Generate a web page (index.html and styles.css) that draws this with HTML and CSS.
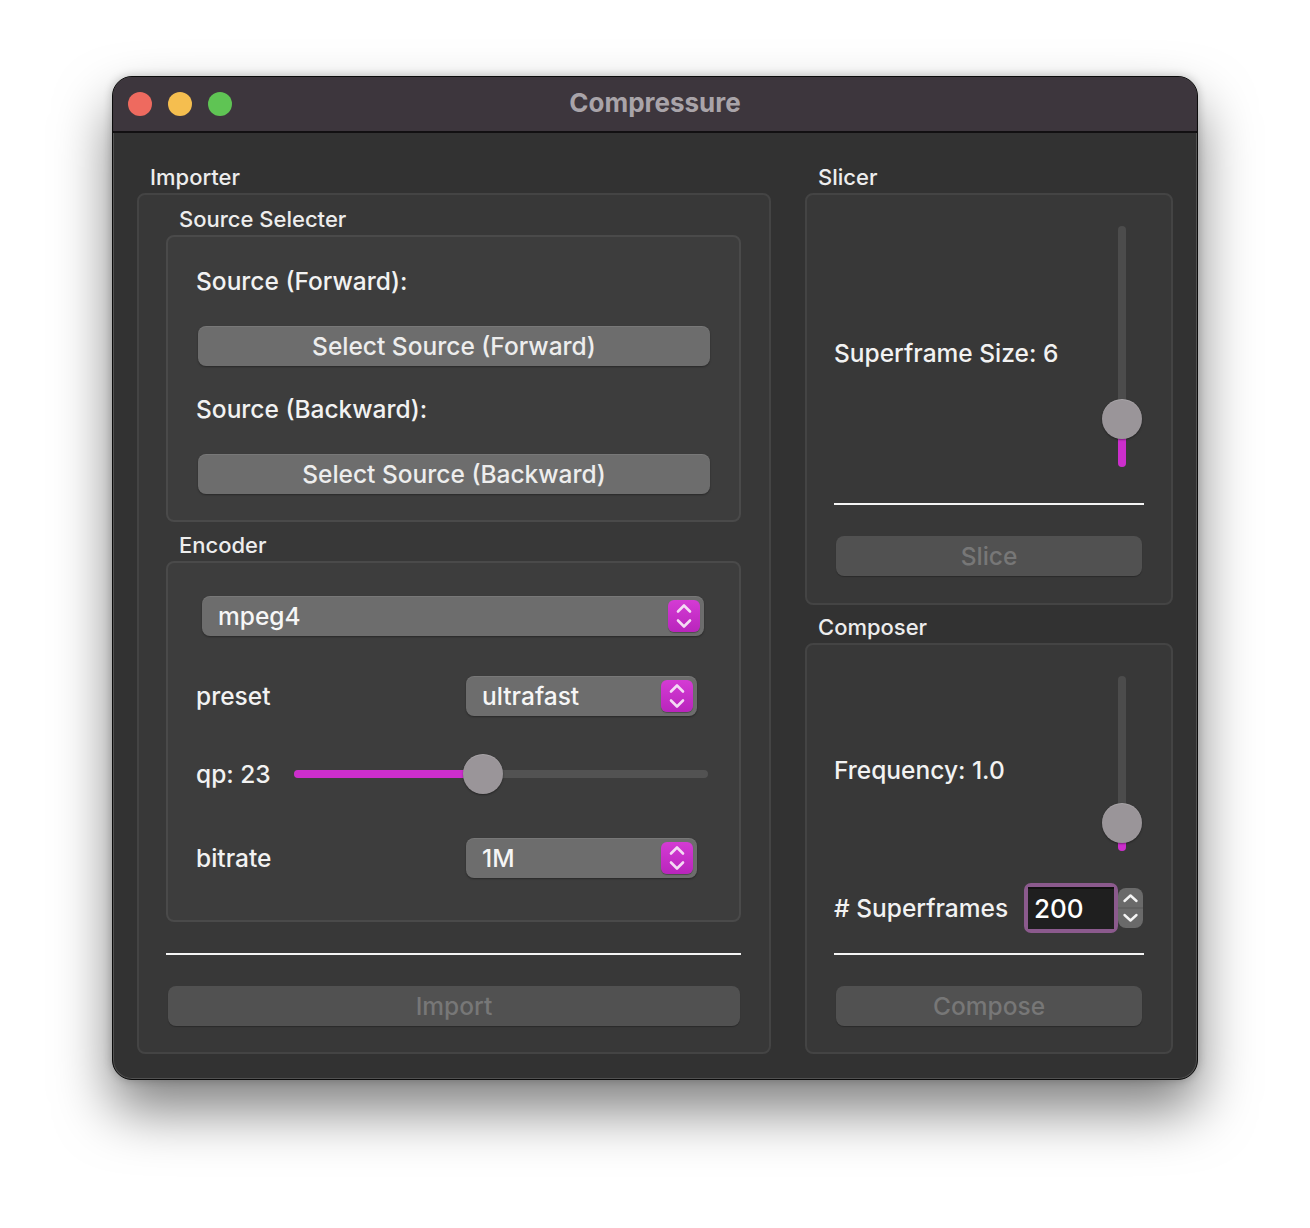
FILE: index.html
```html
<!DOCTYPE html>
<html>
<head>
<meta charset="utf-8">
<link rel="stylesheet" href="styles.css">
</head>
<body>
<div class="window">
  <div class="titlebar">
    <div class="lights">
      <span class="light red"></span>
      <span class="light yellow"></span>
      <span class="light green"></span>
    </div>
    <div class="title">Compressure</div>
  </div>
  <div class="content">
    <div class="col-left">
      <div class="group">
        <div class="group-label">Importer</div>
        <div class="box box-importer">
          <div class="group">
            <div class="group-label">Source Selecter</div>
            <div class="box inner box-source">
              <div class="label row-label">Source (Forward):</div>
              <div class="button push">Select Source (Forward)</div>
              <div class="label row-label second">Source (Backward):</div>
              <div class="button push">Select Source (Backward)</div>
            </div>
          </div>
          <div class="group encoder-group">
            <div class="group-label">Encoder</div>
            <div class="box inner box-encoder">
              <div class="popup popup-wide">
                <span class="popup-text">mpeg4</span>
                <span class="popup-arrow"><svg width="32" height="32" viewBox="0 0 32 32"><path d="M10 11.5 L16 5.5 L22 11.5 M10 20.5 L16 26.5 L22 20.5" fill="none" stroke="#f4daf4" stroke-width="2.6" stroke-linecap="round" stroke-linejoin="round"/></svg></span>
              </div>
              <div class="form-row row-preset">
                <span class="label">preset</span>
                <div class="popup popup-narrow">
                  <span class="popup-text">ultrafast</span>
                  <span class="popup-arrow"><svg width="32" height="32" viewBox="0 0 32 32"><path d="M10 11.5 L16 5.5 L22 11.5 M10 20.5 L16 26.5 L22 20.5" fill="none" stroke="#f4daf4" stroke-width="2.6" stroke-linecap="round" stroke-linejoin="round"/></svg></span>
                </div>
              </div>
              <div class="form-row row-qp">
                <span class="label qp-label">qp: 23</span>
                <div class="hslider">
                  <div class="htrack"></div>
                  <div class="hfill" style="width: 189px"></div>
                  <div class="hknob" style="left: 169px"></div>
                </div>
              </div>
              <div class="form-row row-bitrate">
                <span class="label">bitrate</span>
                <div class="popup popup-narrow">
                  <span class="popup-text">1M</span>
                  <span class="popup-arrow"><svg width="32" height="32" viewBox="0 0 32 32"><path d="M10 11.5 L16 5.5 L22 11.5 M10 20.5 L16 26.5 L22 20.5" fill="none" stroke="#f4daf4" stroke-width="2.6" stroke-linecap="round" stroke-linejoin="round"/></svg></span>
                </div>
              </div>
            </div>
          </div>
          <div class="separator sep-left"></div>
          <div class="button disabled btn-import">Import</div>
        </div>
      </div>
    </div>
    <div class="col-right">
      <div class="group">
        <div class="group-label">Slicer</div>
        <div class="box box-slicer">
          <div class="slider-row slicer-row">
            <span class="label offset-label">Superframe Size: 6</span>
            <div class="vslider">
              <div class="vtrack"></div>
              <div class="vfill" style="height: 48px"></div>
              <div class="vknob" style="bottom: 28px"></div>
            </div>
          </div>
          <div class="separator sep-right"></div>
          <div class="button disabled btn-right">Slice</div>
        </div>
      </div>
      <div class="group composer-group">
        <div class="group-label">Composer</div>
        <div class="box box-composer">
          <div class="slider-row composer-row">
            <span class="label offset-label">Frequency: 1.0</span>
            <div class="vslider">
              <div class="vtrack"></div>
              <div class="vfill" style="height: 28px"></div>
              <div class="vknob" style="bottom: 8px"></div>
            </div>
          </div>
          <div class="spin-row">
            <span class="label"># Superframes</span>
            <div class="spinbox">
              <div class="spin-field">200</div>
            </div>
            <div class="stepper">
              <svg width="25" height="40" viewBox="0 0 25 40"><path d="M6.5 13 L12.5 7.5 L18.5 13" fill="none" stroke="#f4f4f4" stroke-width="2.4" stroke-linecap="round" stroke-linejoin="round"/><line x1="0" y1="20" x2="25" y2="20" stroke="#585858" stroke-width="1"/><path d="M6.5 27 L12.5 32.5 L18.5 27" fill="none" stroke="#f4f4f4" stroke-width="2.4" stroke-linecap="round" stroke-linejoin="round"/></svg>
            </div>
          </div>
          <div class="separator sep-right sep-composer"></div>
          <div class="button disabled btn-right">Compose</div>
        </div>
      </div>
    </div>
  </div>
</div>
</body>
</html>
```

FILE: styles.css
```css
* { box-sizing: border-box; }

html, body {
  margin: 0;
  padding: 0;
  background: #ffffff;
}

body {
  min-height: 1228px;
  padding: 76px 0 0 112px;
  font-family: "Inter", "Noto Sans", "Liberation Sans", sans-serif;
  font-weight: 500;
  color: #ececec;
}

.window {
  width: 1086px;
  height: 1004px;
  background: #323232;
  border-radius: 20px;
  border: 1px solid #0c0c0c;
  box-shadow: inset 0 0 0 1px rgba(255,255,255,0.16), 0 30px 55px rgba(0,0,0,0.5), 0 0 10px rgba(0,0,0,0.22);
  overflow: hidden;
  display: flex;
  flex-direction: column;
}

.titlebar {
  height: 56px;
  background: #3d363d;
  border-bottom: 2px solid #121012;
  position: relative;
  display: flex;
  align-items: center;
  justify-content: center;
  flex-shrink: 0;
  padding-bottom: 3px;
}

.lights {
  position: absolute;
  left: 15px;
  top: 15px;
  display: flex;
  gap: 16px;
}

.light {
  width: 24px;
  height: 24px;
  border-radius: 50%;
  display: block;
}
.light.red { background: #ee6a5f; }
.light.yellow { background: #f5be4f; }
.light.green { background: #5fc454; }

.title {
  font-size: 26px;
  font-weight: 700;
  color: #a9a4a9;
}

.content {
  display: flex;
  gap: 34px;
  padding: 31px 24px 0 24px;
}

.col-left { width: 634px; }
.col-right { width: 368px; }

.group-label {
  font-size: 22px;
  line-height: 26px;
  height: 26px;
  margin-left: 13px;
  margin-bottom: 3px;
  color: #ededed;
}

.box {
  background: #383838;
  border: 2px solid #444444;
  border-radius: 8px;
}

.box.inner {
  background: #3d3d3d;
  border-color: #4a4a4a;
}

.box-importer {
  height: 861px;
  padding: 11px 28px 0 27px;
  display: flex;
  flex-direction: column;
}

.box-source {
  height: 287px;
  padding: 29px 29px 0 28px;
  display: flex;
  flex-direction: column;
}

.label {
  font-size: 24.5px;
  line-height: 30px;
  color: #f2f2f2;
  white-space: nowrap;
}

.row-label { height: 30px; }
.row-label.second { margin-top: 28px; }

.button {
  height: 40px;
  border-radius: 8px;
  font-size: 24.5px;
  display: flex;
  align-items: center;
  justify-content: center;
}

.push {
  margin-top: 30px;
  margin-left: 2px;
  background: #6d6d6d;
  color: #ededed;
  box-shadow: 0 1px 2px rgba(0,0,0,0.35), inset 0 1px 0 rgba(255,255,255,0.08);
}

.disabled {
  background: #515151;
  color: #777777;
  box-shadow: 0 1px 1px rgba(0,0,0,0.25);
}

.encoder-group { margin-top: 10px; }

.box-encoder {
  height: 361px;
  padding: 33px 35px 0 28px;
  display: flex;
  flex-direction: column;
}

.popup {
  height: 40px;
  background: #6d6d6d;
  border-radius: 8px;
  display: flex;
  align-items: center;
  justify-content: space-between;
  padding: 0 4px 0 16px;
  box-shadow: 0 1px 2px rgba(0,0,0,0.35), inset 0 1px 0 rgba(255,255,255,0.08);
}

.popup-wide { margin-left: 6px; }

.popup-text {
  font-size: 24.5px;
  color: #f6f6f6;
}

.popup-arrow {
  width: 32px;
  height: 32px;
  border-radius: 6px;
  background: linear-gradient(#d43bd4, #b925bc);
  display: flex;
  box-shadow: 0 1px 1px rgba(0,0,0,0.3);
}

.form-row {
  display: flex;
  align-items: center;
  justify-content: space-between;
  height: 40px;
}

.popup-narrow { width: 231px; margin-right: 7px; }

.row-preset { margin-top: 40px; }
.row-qp { margin-top: 38px; }
.row-bitrate { margin-top: 44px; }

.qp-label { width: 98px; }

.hslider {
  position: relative;
  width: 414px;
  height: 40px;
  margin-right: -4px;
}

.htrack {
  position: absolute;
  left: 0; right: 0;
  top: 16px;
  height: 8px;
  border-radius: 4px;
  background: #525252;
}

.hfill {
  position: absolute;
  left: 0;
  top: 16px;
  height: 8px;
  border-radius: 4px;
  background: #cc2ecc;
}

.hknob, .vknob {
  position: absolute;
  width: 40px;
  height: 40px;
  border-radius: 50%;
  background: #9a9599;
  box-shadow: 0 1px 2px rgba(0,0,0,0.4), inset 0 1px 0 rgba(255,255,255,0.15);
}

.hknob { top: 0; }

.separator {
  height: 2px;
  background: #f4f4f4;
}

.sep-left { margin-top: 31px; }

.btn-import {
  margin-top: 31px;
  margin-left: 2px;
  margin-right: 1px;
}

.box-slicer {
  height: 412px;
  padding: 31px 27px 0 27px;
  display: flex;
  flex-direction: column;
}

.slider-row {
  display: flex;
  align-items: center;
  justify-content: space-between;
}

.offset-label { padding-top: 12px; }

.slicer-row { height: 241px; }
.composer-row { height: 175px; }

.vslider {
  position: relative;
  width: 40px;
  height: 100%;
  margin-right: 2px;
}

.vtrack {
  position: absolute;
  top: 0; bottom: 0;
  left: 16px;
  width: 8px;
  border-radius: 4px;
  background: #4c4c4c;
}

.vfill {
  position: absolute;
  bottom: 0;
  left: 16px;
  width: 8px;
  border-radius: 4px;
  background: #cc2ecc;
}

.vknob { left: 0; }

.sep-right { margin-top: 36px; }

.btn-right {
  margin-top: 31px;
  margin-left: 2px;
  margin-right: 2px;
}

.composer-group { margin-top: 9px; }

.box-composer {
  height: 411px;
  padding: 31px 27px 0 27px;
  display: flex;
  flex-direction: column;
}

.spin-row {
  display: flex;
  align-items: center;
  height: 50px;
  margin-top: 32px;
}

.spinbox {
  margin-left: auto;
  width: 94px;
  height: 50px;
  border: 4px solid #8b5a8d;
  border-radius: 7px;
  background: #8b5a8d;
}

.spin-field {
  height: 100%;
  background: #1f1f1f;
  border-top: 2px solid #111;
  font-size: 26px;
  line-height: 39px;
  padding-left: 6px;
  color: #ffffff;
}

.stepper {
  width: 25px;
  height: 40px;
  margin-right: 1px;
  border-radius: 8px;
  background: #6a6a6a;
  display: flex;
}

.sep-composer { margin-top: 20px; }
```
